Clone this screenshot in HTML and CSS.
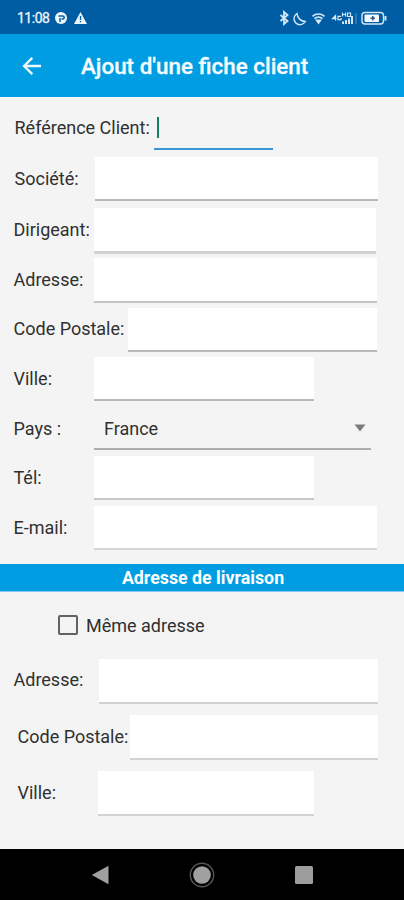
FILE: index.html
```
<!DOCTYPE html>
<html lang="fr">
<head>
<meta charset="utf-8">
<title>Ajout d'une fiche client</title>
<link rel="stylesheet" href="styles.css">
</head>
<body>
<div class="status">
  <span class="time">11:08</span>
  <svg class="notif" width="32" height="14" viewBox="0 0 32 14">
    <circle cx="6" cy="7" r="6" fill="#eef5fb"/>
    <path d="M5 11V7M3.500 5h4.200a1.500 1.500 0 0 1 0 3H6.500" fill="none" stroke="#005da4" stroke-width="1.500"/>
    <path d="M25.500 1 32 13H19Z" fill="#eef5fb"/>
    <path d="M25.500 5v4M25.500 10v1.300" stroke="#005da4" stroke-width="1.300"/>
  </svg>
  <svg class="system" width="112" height="16" viewBox="0 0 112 16" fill="none" stroke="#d3e6f7" stroke-width="1.400">
    <path d="M2.500 5l7 6-3.500 3V2l3.500 3-7 6" stroke-width="1.800"/>
    <path d="M19 3.500a6 6 0 1 0 8.300 8 8.500 8.500 0 0 1-8.300-8Z" stroke-width="1.400"/>
    <path d="M34.500 6.300a9 9 0 0 1 12 0M36.500 8.600a6 6 0 0 1 8 0" stroke-width="1.600"/>
    <path d="M37 9.500h7L40.500 14.500Z" fill="#d3e6f7" stroke="none"/>
    <path d="M57.500 10.500v-5l-3 3.200h4M63 6.300h-3v3.400h3v-1.600" stroke-width="1.200"/>
    <path d="M64.500 6.500V2.500M67.500 6.500V2.500M64.500 4.500h3M69.500 3h3v3.500h-3z" stroke-width="1.200"/>
    <path d="M65 14v-2.500M68 14v-4M71 14V8.500M74 14V6" stroke-width="2"/>
    <path d="M78 3v11" stroke="#4a8fc5" stroke-width="1.100"/>
    <rect x="84" y="2.500" width="21.500" height="11.500" rx="3"/>
    <rect x="86.500" y="4.500" width="14.500" height="7.500" rx="1" fill="#f5fafe" stroke="none"/>
    <path d="M107.500 6v4.500" stroke-width="2"/>
    <path d="M92.500 8.200h4.500M94.800 6v4.400" stroke="#31518a" stroke-width="1.500"/>
  </svg>
</div>
<header class="appbar">
  <svg width="20" height="20" viewBox="0 0 20 20" fill="none" stroke="#eef8fe" stroke-width="2.400"><path d="M19 10H2.500M10.300 1.800 2.100 10l8.200 8.200"/></svg>
  <h1>Ajout d'une fiche client</h1>
</header>
<main>
  <div class="row reference"><label>Référence Client:</label><div class="input active"><span class="caret"></span></div></div>
  <div class="row company"><label>Société:</label><div class="input"></div></div>
  <div class="row manager"><label>Dirigeant:</label><div class="input"></div></div>
  <div class="row address"><label>Adresse:</label><div class="input"></div></div>
  <div class="row postcode"><label>Code Postale:</label><div class="input"></div></div>
  <div class="row city"><label>Ville:</label><div class="input"></div></div>
  <div class="row country"><label>Pays :</label><div class="input select"><span>France</span><svg width="12" height="8" viewBox="0 0 12 8"><path d="M.500.500h11L6 7.500Z" fill="#7b7b7b"/></svg></div></div>
  <div class="row phone"><label>Tél:</label><div class="input"></div></div>
  <div class="row email"><label>E-mail:</label><div class="input"></div></div>
  <h2>Adresse de livraison</h2>
  <div class="same"><span class="box"></span><label>Même adresse</label></div>
  <div class="row ship-address"><label>Adresse:</label><div class="input"></div></div>
  <div class="row ship-postcode"><label>Code Postale:</label><div class="input"></div></div>
  <div class="row ship-city"><label>Ville:</label><div class="input"></div></div>
</main>
<nav>
  <svg width="18" height="20" viewBox="0 0 18 20"><path d="M17.500.800v18.400L.800 10Z" fill="#a0a0a0"/></svg>
  <svg width="26" height="26" viewBox="0 0 26 26"><circle cx="13" cy="13" r="11.700" fill="none" stroke="#55555b" stroke-width="1.400"/><circle cx="13" cy="13" r="8.800" fill="#a0a0a0"/></svg>
  <svg width="18" height="18" viewBox="0 0 18 18"><rect width="18" height="18" rx="1.500" fill="#9c9c9c"/></svg>
</nav>
</body>
</html>
```
FILE: styles.css
```
* { box-sizing: border-box; }
body {
  margin: 0;
  width: 404px;
  height: 900px;
  overflow: hidden;
  display: flex;
  flex-direction: column;
  background: #f4f4f4;
  color: #303030;
  font: 18px/22px Roboto, sans-serif;
}
svg { display: block; flex: none; }
.status {
  height: 34px;
  display: flex;
  align-items: center;
  padding: 2px 14px 0 17px;
  background: #005da4;
}
.time { width: 32px; font-size: 14px; letter-spacing: -0.5px; color: #eef5fb; white-space: nowrap; -webkit-text-stroke: 0.3px #eef5fb; }
.notif { margin-left: 6px; }
.system { margin-left: auto; }
.appbar {
  height: 63px;
  display: flex;
  align-items: center;
  padding: 1px 0 0 22px;
  background: #009de3;
  color: #f5fbff;
}
h1 { margin: 0 0 0 39px; font-size: 22.4px; line-height: 28px; font-weight: 500; white-space: nowrap; -webkit-text-stroke: 0.3px #f5fbff; }
main { flex: 1; display: flex; flex-direction: column; }
.row {
  --line: #b8b8b8;
  display: grid;
  grid-template-columns: 80px 282px;
  flex: none;
  height: 44px;
  margin: 6px 0 0 14px;
}
.row label { padding-top: 11px; margin-left: -0.5px; white-space: nowrap; }
.input { background: #fff; border-bottom: 2px solid var(--line); }
.reference { grid-template-columns: 139px 119px; height: 37px; margin: 16px 0 0 14.5px; }
.reference label { padding-top: 4px; margin-left: 0; }
.active { background: none; border-color: #3698d9; padding: 4px 0 0 3px; }
.caret { display: block; width: 2px; height: 21px; background: #16805f; }
.company { grid-template-columns: 80px 283px; height: 44px; margin: 7px 0 0 15px; }
.manager { --line: #d1d1d1; height: 46px; margin-top: 7px; }
.manager .input { border-bottom-width: 3px; }
.address { --line: #c4c4c4; grid-template-columns: 80px 283px; margin-top: 4px; height: 45px; }
.postcode { grid-template-columns: 114px 249px; margin-top: 5px; }
.postcode label { padding-top: 10px; }
.city { grid-template-columns: 80px 220px; margin-top: 5px; }
.country { --line: #adadad; grid-template-columns: 80px 277px; margin-top: 5px; }
.country label { padding-top: 12px; }
.select { background: none; display: flex; justify-content: space-between; padding: 12px 5px 0 10px; }
.select svg { margin-top: 6px; }
.phone { --line: #c8c8c8; grid-template-columns: 80px 220px; }
.email { --line: #d6d6d6; grid-template-columns: 80px 283px; }
h2 {
  margin: 14px 0 0;
  height: 28px;
  padding: 3px 0 0 2px;
  background: #009de3;
  border-bottom: 1px solid #83ccef;
  color: #fff;
  text-align: center;
  font-size: 17.8px;
  line-height: 22px;
  font-weight: 700;
}
.same { display: flex; align-items: center; height: 22px; margin: 22px 0 0 58px; }
.same label { margin: 1px 0 0 8px; white-space: nowrap; }
.box { width: 20px; height: 20px; border: 2px solid #626262; border-radius: 2px; }
.ship-address { --line: #d0d0d0; grid-template-columns: 85px 279px; height: 45px; margin-top: 23px; }
.ship-address label { padding-top: 10px; }
.ship-postcode { --line: #d3d3d3; grid-template-columns: 112px 248px; height: 45px; margin: 11px 0 0 18px; }
.ship-city { --line: #d3d3d3; grid-template-columns: 80px 216px; height: 45px; margin: 11px 0 0 18px; }
nav {
  height: 51px;
  flex: none;
  display: flex;
  align-items: center;
  justify-content: space-between;
  padding: 0 91px;
  background: #000;
}
```
